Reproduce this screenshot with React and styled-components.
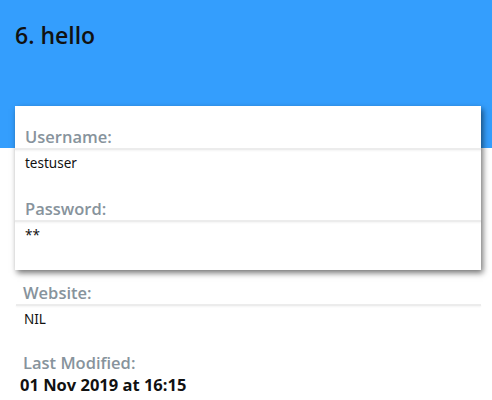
import React from 'react'
import styled, { createGlobalStyle } from 'styled-components'

const Global = createGlobalStyle`
body{
margin:0;
background:#fff;
font-family:"Open Sans","Noto Sans",sans-serif;
}
`
const Header = styled.div`
background:#349efd;
height:148px;
padding:20px 15px 0 15px;
box-sizing:border-box;
`
const Title = styled.div`
font-size:23px;
font-weight:600;
color:#111;
line-height:30px;
`
const Card = styled.div`
margin:-42px 11px 0 15px;
background:#fff;
box-shadow:2px 3px 6px rgba(0,0,0,0.55);
padding:20px 0 10px 0;
height:164px;
box-sizing:border-box;
`
const Section = styled.div`
padding:0 0 ${p => p.gap || 0}px 0;
`
const Label = styled.div`
font-size:16.5px;
font-weight:600;
color:#87939c;
line-height:22px;
padding-left:${p => p.indent || 10}px;
`
const Divider = styled.div`
height:2px;
background:#ececec;
box-shadow:0 1px 2px rgba(0,0,0,0.05);
`
const Value = styled.div`
font-family:"Noto Sans","Open Sans",sans-serif;
font-size:13.5px;
color:#111;
line-height:18px;
padding:4px 0 0 ${p => p.indent || 10}px;
`
const Lower = styled.div`
margin:12px 11px 0 16px;
`
const Modified = styled.div`
display:flex;
flex-direction:column;
margin-top:-2px;
`
const Date = styled.div`
font-size:16.5px;
font-weight:700;
color:#111;
line-height:22px;
padding-left:4px;
`

const App = () => {
    return (
        <>
            <Global />
            <Header>
                <Title>6. hello</Title>
            </Header>
            <Card>
                <Section gap={26}>
                    <Label>Username:</Label>
                    <Divider />
                    <Value>testuser</Value>
                </Section>
                <Section>
                    <Label>Password:</Label>
                    <Divider />
                    <Value>**</Value>
                </Section>
            </Card>
            <Lower>
                <Section gap={26}>
                    <Label indent={7}>Website:</Label>
                    <Divider />
                    <Value indent={8}>NIL</Value>
                </Section>
                <Modified>
                    <Label indent={7}>Last Modified:</Label>
                    <Date>01 Nov 2019 at 16:15</Date>
                </Modified>
            </Lower>
        </>
    );
};
export default App;
